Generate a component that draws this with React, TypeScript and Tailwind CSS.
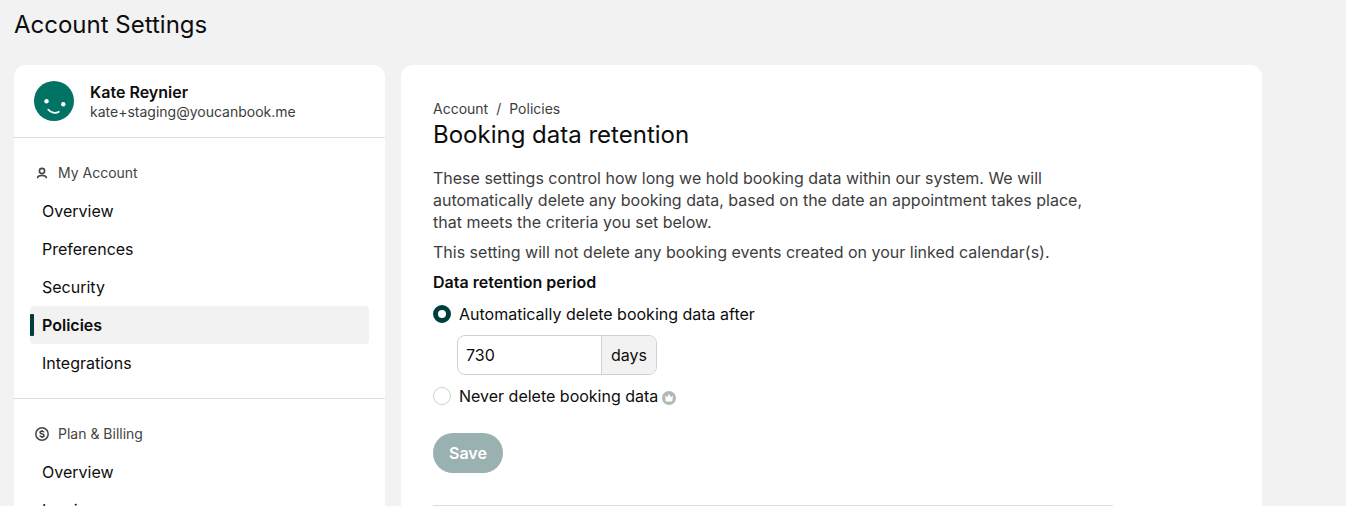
import { useState } from 'react';

interface NavSection {
  title: string;
  icon: React.ReactNode;
  items: string[];
}

function UserIcon() {
  return (
    <svg width="16" height="16" viewBox="0 0 16 16" fill="none" stroke="currentColor" strokeWidth="1.6">
      <circle cx="8" cy="6" r="2.6" />
      <path d="M3.6 13.2v-.3c0-1.500 1.300-2.400 4.400-2.400s4.400.9 4.400 2.400v.3" />
    </svg>
  );
}

function DollarIcon() {
  return (
    <svg width="16" height="16" viewBox="0 0 16 16" fill="none" stroke="currentColor" strokeWidth="1.5">
      <circle cx="8" cy="8" r="6.2" />
      <path d="M10 6.4C9.8 5.7 9.1 5.3 8 5.3c-1.200 0-2 .5-2 1.300 0 2 4.100.8 4.100 2.800 0 .8-.8 1.300-2.100 1.300-1.200 0-2-.5-2.200-1.300M8 4.100v1.200M8 10.700v1.200" />
    </svg>
  );
}

function Avatar() {
  return (
    <svg className="shrink-0" width="40" height="40" viewBox="0 0 40 40">
      <circle cx="20" cy="20" r="20" fill="#007364" />
      <circle cx="12.500" cy="20.300" r="2.200" fill="#fff" />
      <circle cx="29.300" cy="23.200" r="2.200" fill="#fff" />
      <path d="M14.200 28.600c2.200 3.200 7.600 4.100 10.600 2.100" fill="none" stroke="#fff" strokeWidth="1.700" strokeLinecap="round" />
    </svg>
  );
}

function CrownBadge() {
  return (
    <svg width="14" height="14" viewBox="0 0 14 14" role="img" aria-label="Paid feature">
      <circle cx="7" cy="7" r="7" fill="#b0bab5" />
      <path
        d="M3 4.500l2 1.700L7 3l2 3.200 2-1.700-.8 6H3.800z"
        fill="#fff"
      />
    </svg>
  );
}

const sections: NavSection[] = [
  {
    title: 'My Account',
    icon: <UserIcon />,
    items: ['Overview', 'Preferences', 'Security', 'Policies', 'Integrations'],
  },
  {
    title: 'Plan & Billing',
    icon: <DollarIcon />,
    items: ['Overview', 'Invoices'],
  },
];

function NavItem({ label, active }: { label: string; active: boolean }) {
  return (
    <li>
      <a
        href="#"
        aria-current={active ? 'page' : undefined}
        className={`flex h-[38px] items-center gap-2 rounded ${active ? 'bg-[#f2f2f2] font-semibold' : ''}`}
      >
        <span className={`h-[22px] w-1 rounded-[1px] ${active ? 'bg-[#003d3d]' : ''}`} />
        {label}
      </a>
    </li>
  );
}

function Sidebar() {
  return (
    <aside className="w-[371px] shrink-0 rounded-t-xl bg-white">
      <div className="flex items-center gap-4 border-b border-[#dcdcdc] px-5 py-4">
        <Avatar />
        <div className="-mb-0.5 leading-5">
          <p className="font-semibold">Kate Reynier</p>
          <p className="text-sm leading-5 text-[#3d3d3d]">kate+staging@youcanbook.me</p>
        </div>
      </div>
      {sections.map((section) => (
        <nav key={section.title} aria-label={section.title} className="border-b border-[#dcdcdc] p-4">
          <h2 className="flex h-[38px] items-center gap-2 pl-1 text-sm text-[#444444]">
            {section.icon}
            {section.title}
          </h2>
          <ul>
            {section.items.map((item) => (
              <NavItem key={item} label={item} active={item === 'Policies'} />
            ))}
          </ul>
        </nav>
      ))}
    </aside>
  );
}

const radioClass =
  'size-[18px] shrink-0 appearance-none rounded-full border border-[#ccd4d2] bg-white checked:border-[5px] checked:border-[#003d3d]';

function RetentionForm() {
  const [mode, setMode] = useState('auto');
  const [days, setDays] = useState('730');

  return (
    <form className="mt-2" onSubmit={(e) => e.preventDefault()}>
      <fieldset>
        <legend className="font-semibold">Data retention period</legend>
        <label className="mt-[10px] flex items-center gap-2">
          <input
            type="radio"
            name="retention"
            className={radioClass}
            checked={mode === 'auto'}
            onChange={() => setMode('auto')}
          />
          Automatically delete booking data after
        </label>
        <div className="mt-[10px] ml-6 flex h-10 w-[200px] overflow-hidden rounded-lg border border-[#ccd4d2]">
          <input
            id="days"
            type="text"
            className="min-w-0 flex-1 px-2 outline-none"
            value={days}
            onChange={(e) => setDays(e.target.value)}
          />
          <label
            htmlFor="days"
            className="flex w-[55px] items-center justify-center border-l border-[#ccd4d2] bg-[#f2f2f2]"
          >
            days
          </label>
        </div>
        <label className="mt-[10px] flex items-center gap-2">
          <input
            type="radio"
            name="retention"
            className={radioClass}
            checked={mode === 'never'}
            onChange={() => setMode('never')}
          />
          <span className="flex items-center gap-1">
            Never delete booking data
            <span className="pt-1">
              <CrownBadge />
            </span>
          </span>
        </label>
      </fieldset>
      <button type="submit" className="mt-[26px] h-10 rounded-full bg-[#99b1b1] px-4 font-semibold text-white">
        Save
      </button>
    </form>
  );
}

export default function App() {
  return (
    <div className="flex h-screen flex-col overflow-hidden bg-[#f2f2f2] px-[14px] font-['Inter',sans-serif] text-base leading-[22px] text-[#0d0d0d]">
      <h1 className="pt-[9px] pb-6 text-2xl leading-8">Account Settings</h1>
      <div className="flex max-w-[1248px] flex-1 gap-4">
        <Sidebar />
        <main className="min-w-0 flex-1 rounded-t-xl bg-white p-8">
          <nav aria-label="Breadcrumb" className="flex gap-2 text-sm leading-6 text-[#3d3d3d]">
            <a href="#">Account</a>
            <span>/</span>
            <a href="#">Policies</a>
          </nav>
          <div className="max-w-[680px]">
            <h2 className="text-2xl leading-7">Booking data retention</h2>
            <p className="mt-[18px] text-[#3d3d3d]">
              These settings control how long we hold booking data within our system. We will automatically delete any
              booking data, based on the date an appointment takes place, that meets the criteria you set below.
            </p>
            <p className="mt-2 text-[#3d3d3d]">
              This setting will not delete any booking events created on your linked calendar(s).
            </p>
            <RetentionForm />
            <hr className="mt-8 border-[#dcdcdc]" />
          </div>
        </main>
      </div>
    </div>
  );
}
